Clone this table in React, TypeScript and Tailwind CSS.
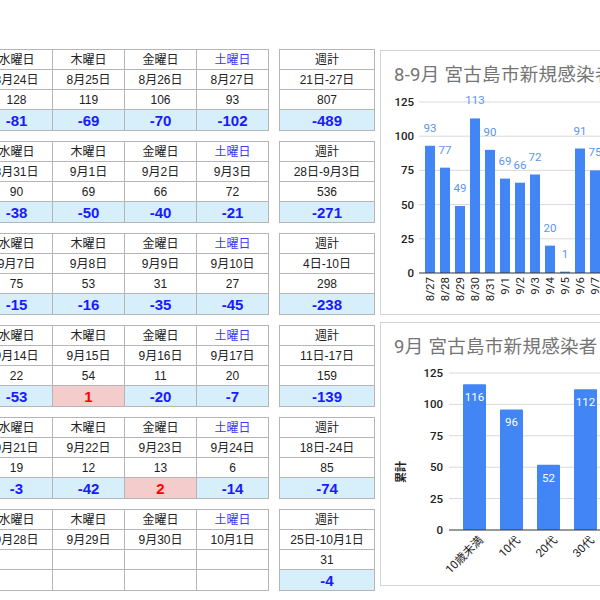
import React from 'react';

type Day = { date: string; count: string; diff: string; up?: boolean };
type Week = { days: Day[]; range: string; total: string; diff: string };

const dayNames = ['水曜日', '木曜日', '金曜日', '土曜日'];

const weeks: Week[] = [
  {
    days: [
      { date: '8月24日', count: '128', diff: '-81' },
      { date: '8月25日', count: '119', diff: '-69' },
      { date: '8月26日', count: '106', diff: '-70' },
      { date: '8月27日', count: '93', diff: '-102' },
    ],
    range: '21日-27日',
    total: '807',
    diff: '-489',
  },
  {
    days: [
      { date: '8月31日', count: '90', diff: '-38' },
      { date: '9月1日', count: '69', diff: '-50' },
      { date: '9月2日', count: '66', diff: '-40' },
      { date: '9月3日', count: '72', diff: '-21' },
    ],
    range: '28日-9月3日',
    total: '536',
    diff: '-271',
  },
  {
    days: [
      { date: '9月7日', count: '75', diff: '-15' },
      { date: '9月8日', count: '53', diff: '-16' },
      { date: '9月9日', count: '31', diff: '-35' },
      { date: '9月10日', count: '27', diff: '-45' },
    ],
    range: '4日-10日',
    total: '298',
    diff: '-238',
  },
  {
    days: [
      { date: '9月14日', count: '22', diff: '-53' },
      { date: '9月15日', count: '54', diff: '1', up: true },
      { date: '9月16日', count: '11', diff: '-20' },
      { date: '9月17日', count: '20', diff: '-7' },
    ],
    range: '11日-17日',
    total: '159',
    diff: '-139',
  },
  {
    days: [
      { date: '9月21日', count: '19', diff: '-3' },
      { date: '9月22日', count: '12', diff: '-42' },
      { date: '9月23日', count: '13', diff: '2', up: true },
      { date: '9月24日', count: '6', diff: '-14' },
    ],
    range: '18日-24日',
    total: '85',
    diff: '-74',
  },
  {
    days: [
      { date: '9月28日', count: '', diff: '' },
      { date: '9月29日', count: '', diff: '' },
      { date: '9月30日', count: '', diff: '' },
      { date: '10月1日', count: '', diff: '' },
    ],
    range: '25日-10月1日',
    total: '31',
    diff: '-4',
  },
];

// base cell, no colour / size so the variants below don't fight it
const cellBase = 'flex items-center justify-center border-b border-r border-[#b5b5b5] leading-none';
const plain = `${cellBase} h-[20px] text-[12px] text-[#222]`;
const diffCell = `${cellBase} h-[21px] text-[15px] font-bold`;

function diffColor(d: string, up?: boolean) {
  if (d === '') return 'bg-white';
  if (up) return 'bg-[#f4cccc] text-[#ff0000]';
  return 'bg-[#d6effb] text-[#1a1aff]';
}

function WeekBlock({ week }: { week: Week }) {
  return (
    <div className="flex gap-[10px]">
      <div className="grid w-[289px] grid-cols-4 border-l border-t border-[#b5b5b5]">
        {dayNames.map((name) => (
          <div key={name} className={`${cellBase} h-[20px] text-[12px] ${name === '土曜日' ? 'text-[#3b3bf5]' : 'text-[#222]'}`}>{name}</div>
        ))}
        {week.days.map((d) => <div key={d.date} className={plain}>{d.date}</div>)}
        {week.days.map((d) => <div key={d.date + 'c'} className={plain}>{d.count}</div>)}
        {week.days.map((d) => (
          <div key={d.date + 'd'} className={`${diffCell} ${diffColor(d.diff, d.up)}`}>{d.diff}</div>
        ))}
      </div>
      <div className="grid w-[96px] grid-cols-1 border-l border-t border-[#b5b5b5]">
        <div className={plain}>週計</div>
        <div className={plain}>{week.range}</div>
        <div className={plain}>{week.total}</div>
        <div className={`${diffCell} bg-[#d6effb] text-[#1a1aff]`}>{week.diff}</div>
      </div>
    </div>
  );
}

const dailyData: Array<[string, number]> = [
  ['8/27', 93], ['8/28', 77], ['8/29', 49], ['8/30', 113], ['8/31', 90], ['9/1', 69],
  ['9/2', 66], ['9/3', 72], ['9/4', 20], ['9/5', 1], ['9/6', 91], ['9/7', 75], ['9/8', 53],
];

const ageData: Array<[string, number]> = [['10歳未満', 116], ['10代', 96], ['20代', 52], ['30代', 112], ['40代', 90]];

const chartFont = "Roboto, 'Noto Sans CJK JP', sans-serif";

function DailyChart() {
  const base = 186;
  const k = 171 / 125;
  return (
    <svg width="300" height="226" className="block" fontFamily={chartFont}>
      {[0, 25, 50, 75, 100, 125].map((v) => (
        <g key={v}>
          {v > 0 && <line x1="38" x2="300" y1={base - v * k} y2={base - v * k} stroke="#d9d9d9" strokeWidth="1" />}
          <text x="33" y={base - v * k} textAnchor="end" dominantBaseline="central" fontSize="11.5" fontWeight="500" fill="#222">{v}</text>
        </g>
      ))}
      {dailyData.map(([label, v], i) => {
        const x = 44 + i * 15;
        const h = v * k;
        return (
          <g key={label}>
            <rect x={x} y={base - h} width="10" height={h} fill="#4285f4" />
            <text x={x + 5} y={base - h - 18} textAnchor="middle" dominantBaseline="central" fontSize="11.5" fill="#5b95f5">{v}</text>
            <text transform={`translate(${x + 5} ${base + 4}) rotate(-90)`} textAnchor="end" dominantBaseline="central" fontSize="11.5" fill="#222">{label}</text>
          </g>
        );
      })}
      <line x1="38" x2="300" y1={base} y2={base} stroke="#333" strokeWidth="1" />
    </svg>
  );
}

function AgeChart() {
  const base = 171;
  const k = 157 / 125;
  return (
    <svg width="300" height="225" className="block" fontFamily={chartFont}>
      <text transform="translate(20 113) rotate(-90)" textAnchor="middle" dominantBaseline="central" fontSize="11" fontWeight="bold" fill="#222">累計</text>
      {[0, 25, 50, 75, 100, 125].map((v) => (
        <g key={v}>
          {v > 0 && <line x1="68" x2="300" y1={base - v * k} y2={base - v * k} stroke="#d9d9d9" strokeWidth="1" />}
          <text x="62" y={base - v * k} textAnchor="end" dominantBaseline="central" fontSize="11.5" fontWeight="500" fill="#222">{v}</text>
        </g>
      ))}
      {ageData.map(([label, v], i) => {
        const x = 82 + i * 37;
        const h = v * k;
        return (
          <g key={label}>
            <rect x={x} y={base - h} width="23" height={h} fill="#4285f4" rx="1" />
            <text x={x + 11.5} y={base - h + 13} textAnchor="middle" dominantBaseline="central" fontSize="11.5" fill="#ffffff">{v}</text>
            <text transform={`translate(${x + 18} ${base + 8}) rotate(-45)`} textAnchor="end" dominantBaseline="central" fontSize="11.5" fill="#222">{label}</text>
          </g>
        );
      })}
      <line x1="68" x2="300" y1={base} y2={base} stroke="#333" strokeWidth="1" />
    </svg>
  );
}

function ChartPanel({ title, height, children }: { title: string; height: string; children: React.ReactNode }) {
  return (
    <div className={`${height} w-[280px] shrink-0 overflow-hidden border border-[#d4d4d4] bg-white pt-[12px]`}>
      <div className="h-[24px] whitespace-nowrap pl-[13px] text-[18.5px] leading-[24px] tracking-[0.3px] text-[#757575]" style={{ fontFamily: chartFont }}>
        {title}
      </div>
      {children}
    </div>
  );
}

export default function App() {
  return (
    <div className="flex h-[600px] w-[600px] overflow-hidden bg-white pt-[49px] font-['Liberation_Sans','Noto_Sans_CJK_JP',sans-serif]">
      <div className="-ml-[20px] flex shrink-0 flex-col gap-[10px]">
        {weeks.map((w) => <WeekBlock key={w.range} week={w} />)}
      </div>
      <div className="ml-[5px] flex shrink-0 flex-col gap-[7px] pt-[1px]">
        <ChartPanel title="8-9月 宮古島市新規感染者数" height="h-[265px]">
          <DailyChart />
        </ChartPanel>
        <ChartPanel title="9月 宮古島市新規感染者" height="h-[264px]">
          <AgeChart />
        </ChartPanel>
      </div>
    </div>
  );
}
